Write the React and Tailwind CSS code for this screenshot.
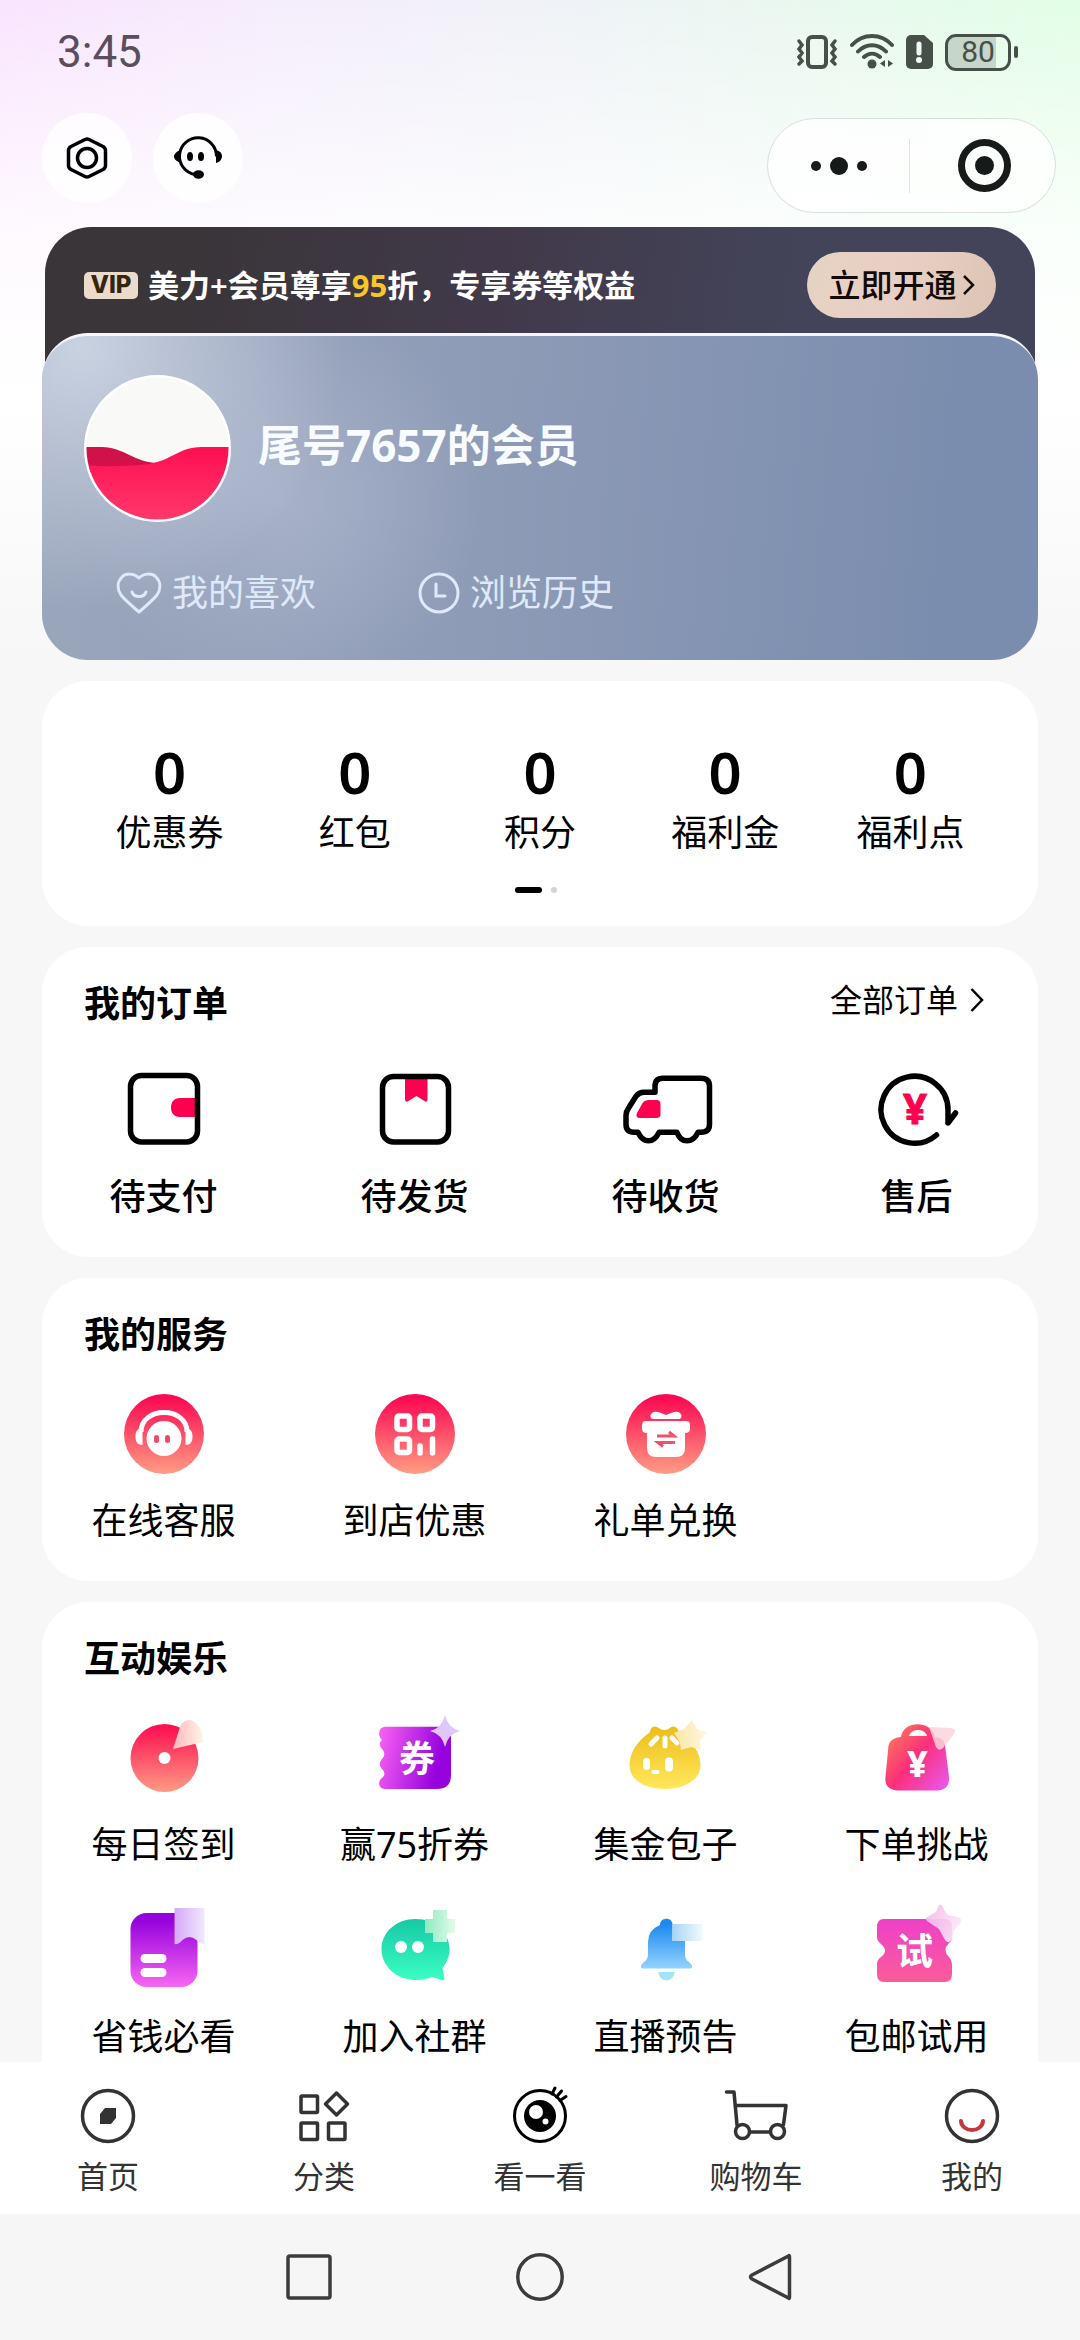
import React from 'react'

/* ---------- status bar ---------- */
function StatusBar() {
  return (
    <div className="flex h-[104px] items-center justify-between pl-[57px] pr-[62px] text-[#4b4a4e]">
      <span className="[font-family:Roboto,sans-serif] text-[44px] leading-none text-[#5a4d5c]">3:45</span>
      <div className="flex items-center gap-3">
        <svg width="42" height="36" viewBox="0 0 42 36" fill="none" stroke="#465048" strokeWidth="3" strokeLinecap="round">
          <rect x="12" y="3" width="18" height="30" rx="4" strokeWidth="4" />
          <path d="M3 7l3 4-3 4 3 4-3 4 3 4-3 3M39 7l-3 4 3 4-3 4 3 4-3 4 3 3" strokeWidth="3.500" />
        </svg>
        <svg width="44" height="36" viewBox="0 0 44 36" fill="none" stroke="#465048" strokeWidth="4" strokeLinecap="round">
          <path d="M2 11C13-1 31-1 42 11M8 17.500C16 9 28 9 36 17.500M14 23C19 18.500 25 18.500 30 23" />
          <circle cx="22" cy="30" r="4.500" fill="#465048" stroke="none" />
          <path d="M35 26v7l-5-3.500zM38 26v7l5-3.500z" fill="#465048" stroke="none" />
        </svg>
        <svg width="27" height="34" viewBox="0 0 27 34">
          <path d="M5 0h13l9 8v21a5 5 0 0 1-5 5H5a5 5 0 0 1-5-5V5a5 5 0 0 1 5-5z" fill="#465048" />
          <path d="M13 9v9" stroke="#f0fdf4" strokeWidth="5" strokeLinecap="round" />
          <circle cx="13" cy="25" r="3" fill="#f0fdf4" />
        </svg>
        <div className="flex items-center gap-[3px]">
          <div className="flex h-[37px] w-[66px] items-center justify-center rounded-[11px] border-[3px] border-[#465048] bg-[linear-gradient(90deg,#c6d6ca_80%,transparent_80%)] [font-family:Roboto,sans-serif] text-[30px] leading-none text-[#465048]">
            80
          </div>
          <div className="h-3 w-1 rounded bg-[#465048]"></div>
        </div>
      </div>
    </div>
  )
}

/* ---------- round buttons + mini program capsule ---------- */
function Header() {
  return (
    <header className="flex items-start justify-between pt-[9px] pb-[14px] pl-[42px] pr-6">
      <div className="flex gap-[21px]">
        <button aria-label="设置" className="flex size-[90px] items-center justify-center rounded-full bg-white/80">
          <svg width="48" height="48" viewBox="0 0 48 48" fill="none" stroke="#000" strokeWidth="3.500" strokeLinejoin="round">
            <path d="M22 5.500q2-1 4 0l14 7q2.500 1.500 2.500 4v15q0 2.500-2.500 4l-14 7q-2 1-4 0l-14-7q-2.500-1.500-2.500-4v-15q0-2.500 2.500-4z" />
            <circle cx="24" cy="24" r="9.500" />
          </svg>
        </button>
        <button aria-label="客服" className="flex size-[90px] items-center justify-center rounded-full bg-white/80">
          <svg width="48" height="48" viewBox="0 0 48 48" fill="none" stroke="#000" strokeWidth="3">
            <path d="M42.500 22.500A18.500 18.500 0 1 0 21 40.500" />
            <path d="M7 16v13C2 27 0 25 0 22.500S3 17 7 16zM42 16c4 1 6 3 6 6s-2 6-6 7z" fill="#000" stroke="none" />
            <ellipse cx="24.500" cy="40.500" rx="5.500" ry="4.200" fill="#000" stroke="none" />
            <ellipse cx="16" cy="22.500" rx="3" ry="4.500" fill="#000" stroke="none" />
            <ellipse cx="27" cy="22.500" rx="3" ry="4.500" fill="#000" stroke="none" />
          </svg>
        </button>
      </div>
      <div className="mt-[5px] flex h-[95px] w-[289px] items-center rounded-full border border-[#d9dfdd] bg-white/80">
        <button aria-label="更多" className="flex flex-1 items-center justify-center gap-[9px]">
          <span className="size-[10px] rounded-full bg-[#161a19]"></span>
          <span className="size-[18px] rounded-full bg-[#161a19]"></span>
          <span className="size-[10px] rounded-full bg-[#161a19]"></span>
        </button>
        <span className="h-[54px] w-px bg-[#dde3e1]"></span>
        <button aria-label="关闭" className="flex flex-1 items-center justify-center pl-1">
          <span className="flex size-[53px] items-center justify-center rounded-full border-[7px] border-[#161a19]">
            <span className="size-[19px] rounded-full bg-[#161a19]"></span>
          </span>
        </button>
      </div>
    </header>
  )
}

/* ---------- member card ---------- */
function MemberCard() {
  return (
    <section>
      <div className="mx-[3px] flex items-center justify-between rounded-t-[46px] bg-[linear-gradient(100deg,#3a3539_15%,#41394a_45%,#434459_75%)] px-[39px] pt-[25px] pb-[75px]">
        <div className="flex items-center gap-[10px]">
          <span className="flex h-[27px] w-[54px] items-center justify-center rounded-[5px] bg-[#eadbcb] [font-family:Inter,sans-serif] text-[24px] font-extrabold leading-none text-[#33260c]">
            VIP
          </span>
          <p className="text-[31px] font-semibold leading-10 text-white">
            美力+会员尊享<span className="font-bold text-[#f5c728]">95</span>折，专享券等权益
          </p>
        </div>
        <button className="flex h-[66px] w-[189px] items-center justify-center gap-[6px] rounded-full bg-[linear-gradient(110deg,#e6d3c4,#e8cfc3_50%,#dcc4b4)] text-[32px] font-medium leading-10 text-[#140b08]">
          立即开通
          <svg width="12" height="20" viewBox="0 0 12 20" fill="none" stroke="#140b08" strokeWidth="2.500">
            <path d="M1 1l9 9-9 9" />
          </svg>
        </button>
      </div>

      <div className="relative -mt-[60px] rounded-[46px] border-t-[3px] border-[#f4f6fb] bg-[radial-gradient(circle_at_4%_4%,#c9d2e1_0,rgba(201,210,225,0)_26%),radial-gradient(circle_at_24%_50%,rgba(172,182,206,0.8)_0,rgba(172,182,206,0)_26%),linear-gradient(95deg,#9aa6bb_0,#8e9bb7_45%,#7b8dae_90%)] pt-[39px] pb-[46px]">
        <div className="flex items-center gap-[27px] pl-[42px]">
          <svg width="147" height="147" viewBox="0 0 147 147">
            <defs>
              <clipPath id="face"><circle cx="73.500" cy="73.500" r="71" /></clipPath>
              <linearGradient id="wave" x1="0" y1="0" x2="0" y2="1">
                <stop offset="0" stopColor="#ff0f52" />
                <stop offset="1" stopColor="#ff3a6c" />
              </linearGradient>
            </defs>
            <circle cx="73.500" cy="73.500" r="73.500" fill="#fff" />
            <g clipPath="url(#face)">
              <rect width="147" height="147" fill="#f9faf8" />
              <path d="M0 72h18c22 0 34 17 58 16l-8 10H0z" fill="#d0114a" />
              <path d="M0 90c20 2 40 1 56 0 32-2 36-18 62-18h29v75H0z" fill="url(#wave)" />
            </g>
          </svg>
          <h1 className="pb-2 text-[44px] font-bold leading-[56px] text-[#f8fbff]">尾号7657的会员</h1>
        </div>
        <div className="mt-[50px] flex gap-[102px] pl-[74px] text-[36px] leading-10 text-[#dfe9fa]">
          <a href="#like" className="flex items-center gap-[10px]">
            <svg width="46" height="42" viewBox="0 0 46 42" fill="none" stroke="#dfe9fa" strokeWidth="3" strokeLinecap="round" strokeLinejoin="round">
              <path d="M23 6C18 1 10 1 6 5c-5 5-5 12-1 18 4 5 11 11 18 17 7-6 14-12 18-17 4-6 4-13-1-18-4-4-12-4-17 1z" />
              <path d="M16 20c2 6 12 6 14 0" />
            </svg>
            我的喜欢
          </a>
          <a href="#history" className="flex items-center gap-[10px]">
            <svg width="42" height="42" viewBox="0 0 42 42" fill="none" stroke="#dfe9fa" strokeWidth="3" strokeLinecap="round">
              <circle cx="21" cy="21" r="19" />
              <path d="M18 12v12h9" />
            </svg>
            浏览历史
          </a>
        </div>
      </div>
    </section>
  )
}

const stats = ['优惠券', '红包', '积分', '福利金', '福利点']

function Stats() {
  return (
    <section className="rounded-[46px] bg-white px-[35px] pt-[61px] pb-[33px]">
      <div className="grid grid-cols-5">
        {stats.map((name) => (
          <a href="#assets" key={name} className="flex flex-col items-center gap-[11px]">
            <span className="text-[58px] font-semibold leading-[60px]">0</span>
            <span className="text-[36px] leading-10">{name}</span>
          </a>
        ))}
      </div>
      <div className="mt-[34px] mr-2 flex justify-center gap-[9px]">
        <span className="h-[6px] w-[27px] rounded-full bg-black"></span>
        <span className="size-[6px] rounded-full bg-[#d3d3d3]"></span>
      </div>
    </section>
  )
}

/* ---------- order icons ---------- */
function WalletIcon() {
  return (
    <svg width="96" height="80" viewBox="0 0 96 80" fill="none">
      <path d="M82 29H64c-6 0-9 4-9 9.500S58 48 64 48h18z" fill="#ff0050" />
      <rect x="14.500" y="6.500" width="67" height="66.500" rx="11" stroke="#000" strokeWidth="5.500" />
    </svg>
  )
}

function PackageIcon() {
  return (
    <svg width="96" height="80" viewBox="0 0 96 80" fill="none">
      <path d="M38 8h22.500v22q0 4-3 2l-8-5-8 5q-3.500 2-3.500-2z" fill="#ff0050" />
      <rect x="15.500" y="7.500" width="66" height="65.500" rx="11" stroke="#000" strokeWidth="5.500" />
    </svg>
  )
}

function TruckIcon() {
  return (
    <svg width="96" height="80" viewBox="0 0 96 80" fill="none" strokeLinejoin="round">
      <path d="M31 31h7.500q4 0 4 4v10q0 4-4 4H22q-5 0-3-5l5-9q2-4 7-4z" fill="#ff0050" />
      <path d="M37 23.300v-6q0-8 8-8h38q8.500 0 8.500 8v38q0 8-8.500 8h-3q-4 8.500-11 8.500t-10-8.500H41q-4 8.500-10.500 8.500T20 63.300h-4q-8 0-8-8v-9q0-4 3-8l7-11q3-4 8-4z" stroke="#000" strokeWidth="5.500" />
    </svg>
  )
}

function RefundIcon() {
  return (
    <svg width="96" height="80" viewBox="0 0 96 80" fill="none" strokeLinecap="round" strokeLinejoin="round">
      <path d="M67.500 66A33.500 33.500 0 1 1 79 41v13l7.500-10" stroke="#000" strokeWidth="5.500" />
      <text x="46" y="55" textAnchor="middle" fontSize="42" fontWeight="700" fill="#ff0050" stroke="#ff0050" strokeWidth="1">¥</text>
    </svg>
  )
}

/* ---------- service icons ---------- */
function RoundIcon({ children }) {
  return (
    <svg width="80" height="80" viewBox="0 0 80 80">
      <defs>
        <linearGradient id="round" x1="0" y1="0" x2="0" y2="1">
          <stop offset="0.050" stopColor="#fb0a52" />
          <stop offset="1" stopColor="#ff9d84" />
        </linearGradient>
      </defs>
      <circle cx="40" cy="40" r="40" fill="url(#round)" />
      {children}
    </svg>
  )
}

function HeadsetIcon() {
  return (
    <RoundIcon>
      <path d="M17 38C17 12 63 12 63 38" fill="none" stroke="#fff" strokeWidth="5" />
      <path d="M18.500 34v17c-5 0-7-3-7-8.500s2-8 7-8.500zM61.500 34v17c5 0 7-3 7-8.500s-2-8-7-8.500z" fill="#fff" />
      <circle cx="40" cy="44.500" r="17.500" fill="#fff" />
      <rect x="30" y="41" width="5" height="8" rx="2.500" fill="#f04a6a" />
      <rect x="41" y="41" width="5" height="8" rx="2.500" fill="#f04a6a" />
    </RoundIcon>
  )
}

function QrIcon() {
  return (
    <RoundIcon>
      <g fill="none" stroke="#fff" strokeWidth="5.500">
        <rect x="22" y="22" width="12.500" height="13.500" rx="2" />
        <rect x="45" y="22" width="12.500" height="13.500" rx="2" />
        <rect x="22" y="45" width="12.500" height="13.500" rx="2" />
        <path d="M45 52v7M57.500 45v14" strokeLinecap="round" />
      </g>
    </RoundIcon>
  )
}

function GiftIcon() {
  return (
    <RoundIcon>
      <path d="M28 18c5-1 8 2 12 3 4-1 7-4 12-3 4 1 5 6 1 7H27c-4-1-3-6 1-7z" fill="#fff" />
      <path d="M20 27h40q4 0 4 4v4q0 4-5 4v15q0 9-9 9H30q-9 0-9-9V39q-5 0-5-4v-4q0-4 4-4z" fill="#fff" />
      <path d="M31 42h17l-5-4M49 48.500H32l5 4" fill="none" stroke="#f3506b" strokeWidth="3" />
    </RoundIcon>
  )
}

/* ---------- fun icons ---------- */
function DiscIcon() {
  return (
    <svg width="96" height="96" viewBox="0 0 96 96">
      <defs>
        <linearGradient id="disc" x1="0" y1="0" x2="0" y2="1">
          <stop offset="0.050" stopColor="#fb1251" />
          <stop offset="1" stopColor="#ff9b85" />
        </linearGradient>
        <linearGradient id="discCut" x1="0" y1="0" x2="1" y2="0">
          <stop offset="0" stopColor="#ffb9bd" />
          <stop offset="1" stopColor="#fff3e6" />
        </linearGradient>
      </defs>
      <circle cx="48.500" cy="48" r="34" fill="url(#disc)" />
      <circle cx="48.500" cy="48" r="6" fill="#fff" />
      <path d="M57 39l7-22q3-8 11-7 12 5 12 22z" fill="url(#discCut)" />
    </svg>
  )
}

function CouponIcon() {
  return (
    <svg width="96" height="96" viewBox="0 0 96 96">
      <defs>
        <linearGradient id="coupon" x1="0" y1="0.300" x2="1" y2="0.500">
          <stop offset="0" stopColor="#f45ef2" />
          <stop offset="0.850" stopColor="#9603dc" />
        </linearGradient>
      </defs>
      <path d="M18 16.700h56q10 0 10 10V65q0 14-14 14H18c-7 0-8-8-2-12 2-2 2-5-1-8-3-4-3-6 0-10 3-3 3-7 0-10-3-4-3-6 0-9-5-5-3-13 3-13.300z" fill="url(#coupon)" />
      <text x="50" y="61.500" textAnchor="middle" fontSize="36" fontWeight="700" fill="#fff">券</text>
      <path d="M78 5q3 13 15 16-12 3-15 16-3-13-15-16 12-3 15-16z" fill="#dfc6fb" />
    </svg>
  )
}

function BunIcon() {
  return (
    <svg width="96" height="96" viewBox="0 0 96 96">
      <defs>
        <linearGradient id="bun" x1="0" y1="0" x2="0" y2="1">
          <stop offset="0" stopColor="#edbd1b" />
          <stop offset="1" stopColor="#ffe85c" />
        </linearGradient>
        <linearGradient id="bunStar" x1="0" y1="0" x2="1" y2="0">
          <stop offset="0" stopColor="#f9e6a4" />
          <stop offset="1" stopColor="#fff7e4" />
        </linearGradient>
      </defs>
      <path d="M35 17c4-2 6 3 11.500 3S53 15 57 17c3 1 3 4 5 6 12 8 20 19 20.500 31C83 70 66 79 47 79S11 71 11.500 54C12 41 21 30 31 23c2-2 1-5 4-6z" fill="url(#bun)" />
      <g stroke="#fff" strokeLinecap="round">
        <path d="M33 34l6-6M47 28v8M54 28l5 5" strokeWidth="5" />
        <path d="M28.500 51.500v5" strokeWidth="7" />
        <path d="M51 51.500v6" strokeWidth="8" />
        <path d="M35.500 62h4" strokeWidth="4" />
      </g>
      <path d="M74 10l5 9 10 3-7 8 1 10-10-3-10 3-1-8-6-9 10-4z" fill="url(#bunStar)" />
    </svg>
  )
}

function BagIcon() {
  return (
    <svg width="96" height="96" viewBox="0 0 96 96">
      <defs>
        <linearGradient id="bag" x1="0" y1="0.150" x2="1" y2="1">
          <stop offset="0" stopColor="#ff7a59" />
          <stop offset="0.450" stopColor="#fb2f7a" />
          <stop offset="1" stopColor="#e85bf5" />
        </linearGradient>
      </defs>
      <path d="M32 27c2-17 31-17 34 0q8 0 10 8l4 32q1 13-12 13.500H29q-14-1-12.500-14l3-31q2-8 12.500-8.500z" fill="url(#bag)" />
      <path d="M40 26c2-8 16-8 18 0z" fill="#fff" />
      <text x="48.500" y="66.500" textAnchor="middle" fontSize="36" fontWeight="800" fill="#fff">¥</text>
      <path d="M60 17l22 1q6 1 3 6L74 38q-4 4-7-1z" fill="#fbd3dc" opacity="0.850" />
    </svg>
  )
}

function BookIcon() {
  return (
    <svg width="96" height="96" viewBox="0 0 96 96">
      <defs>
        <linearGradient id="book" x1="0" y1="0" x2="0" y2="1">
          <stop offset="0.100" stopColor="#9503dd" />
          <stop offset="1" stopColor="#f866f2" />
        </linearGradient>
        <linearGradient id="mark" x1="0" y1="0" x2="1" y2="0">
          <stop offset="0" stopColor="#d6a8f6" />
          <stop offset="1" stopColor="#f1e8ff" />
        </linearGradient>
      </defs>
      <rect x="14.500" y="11" width="67" height="74" rx="16" fill="url(#book)" />
      <rect x="24.500" y="52" width="26" height="9" rx="4.500" fill="#fff" />
      <rect x="24.500" y="66" width="26" height="9" rx="4.500" fill="#fff" />
      <path d="M58.500 6h30v36q-5 0-8-4-7-6-14 0-4 5-8 4z" fill="url(#mark)" />
    </svg>
  )
}

function ChatIcon() {
  return (
    <svg width="96" height="96" viewBox="0 0 96 96">
      <defs>
        <linearGradient id="chat" x1="0" y1="0" x2="0" y2="1">
          <stop offset="0" stopColor="#16c8a4" />
          <stop offset="1" stopColor="#3bffc4" />
        </linearGradient>
        <linearGradient id="plus" x1="0" y1="0" x2="1" y2="0">
          <stop offset="0" stopColor="#8eeac0" />
          <stop offset="1" stopColor="#e2fbea" />
        </linearGradient>
      </defs>
      <path d="M48.500 17c19 0 34 13 34 30 0 8-3 14-7 19l2 11q0 2-3 1l-9-3c-5 2-11 3-17 3-19 0-34-14-34-31s15-30 34-30z" fill="url(#chat)" />
      <circle cx="34" cy="45" r="6" fill="#fff" />
      <circle cx="51" cy="45" r="6" fill="#fff" />
      <path d="M66 8h14v9h8v14h-8v9H66v-9h-8V17h8z" fill="url(#plus)" />
    </svg>
  )
}

function BellIcon() {
  return (
    <svg width="96" height="96" viewBox="0 0 96 96">
      <defs>
        <linearGradient id="bell" x1="0" y1="0" x2="0" y2="1">
          <stop offset="0.100" stopColor="#1b89ef" />
          <stop offset="1" stopColor="#93d3ff" />
        </linearGradient>
        <linearGradient id="bellCut" x1="0" y1="0" x2="1" y2="0">
          <stop offset="0" stopColor="#a9d4f5" />
          <stop offset="1" stopColor="#edfaff" />
        </linearGradient>
      </defs>
      <path d="M42 23c0-8 12-8 12.500-1v17H67v13q0 6 4 8 5 4 2 6.500H24q-3-2.500 2-6.500 4-2 4-8V40q0-12 12-17z" fill="url(#bell)" />
      <path d="M54.500 22H84v17H54.500z" fill="url(#bellCut)" />
      <path d="M40 70h17q-2 8.500-8.500 8.500T40 70z" fill="#a3e4f7" />
    </svg>
  )
}

function TrialIcon() {
  return (
    <svg width="96" height="96" viewBox="0 0 96 96">
      <defs>
        <linearGradient id="trial" x1="0" y1="0" x2="0" y2="1">
          <stop offset="0" stopColor="#ee40c8" />
          <stop offset="1" stopColor="#fb5c9a" />
        </linearGradient>
        <linearGradient id="trialStar" x1="0" y1="0" x2="1" y2="0.600">
          <stop offset="0" stopColor="#f5b4e6" />
          <stop offset="1" stopColor="#fceafa" />
        </linearGradient>
      </defs>
      <path d="M15 17h61q7 0 7 8v10q0 4-3 6-7 7 0 14 3 3 3 7v10q0 8-7 8H15q-7 0-7-8V62q0-4 4-7 8-6 0-13-4-3-4-7V25q0-8 7-8z" fill="url(#trial)" />
      <text x="45.500" y="62.500" textAnchor="middle" fontSize="37" fontWeight="700" fill="#fff">试</text>
      <path d="M70 3q4-1 5 5l4 5 10 2q6 3 2 7l-6 6-2 9q-3 6-7 1l-6-11-12-8q-3-3 2-5l7-4z" fill="url(#trialStar)" opacity="0.900" />
    </svg>
  )
}

const orders = [
  { name: '待支付', icon: <WalletIcon /> },
  { name: '待发货', icon: <PackageIcon /> },
  { name: '待收货', icon: <TruckIcon /> },
  { name: '售后', icon: <RefundIcon /> },
]

const services = [
  { name: '在线客服', icon: <HeadsetIcon /> },
  { name: '到店优惠', icon: <QrIcon /> },
  { name: '礼单兑换', icon: <GiftIcon /> },
]

const games = [
  { name: '每日签到', icon: <DiscIcon /> },
  { name: '赢75折券', icon: <CouponIcon /> },
  { name: '集金包子', icon: <BunIcon /> },
  { name: '下单挑战', icon: <BagIcon /> },
  { name: '省钱必看', icon: <BookIcon /> },
  { name: '加入社群', icon: <ChatIcon /> },
  { name: '直播预告', icon: <BellIcon /> },
  { name: '包邮试用', icon: <TrialIcon /> },
]

function Orders() {
  return (
    <section className="rounded-[46px] bg-white pt-[37px] pb-10">
      <div className="flex items-start justify-between pl-[42px] pr-[54px]">
        <h2 className="text-[36px] font-bold leading-10">我的订单</h2>
        <a href="#orders" className="flex items-center gap-3 text-[32px] leading-8">
          全部订单
          <svg width="14" height="24" viewBox="0 0 14 24" fill="none" stroke="#000" strokeWidth="2.500">
            <path d="M1.500 1l10.500 11-10.500 11" />
          </svg>
        </a>
      </div>
      <div className="-mx-1 mt-[45px] grid grid-cols-4">
        {orders.map((item) => (
          <a href="#order" key={item.name} className="flex flex-col items-center gap-7">
            {item.icon}
            <span className="text-[36px] font-medium leading-10">{item.name}</span>
          </a>
        ))}
      </div>
    </section>
  )
}

function Services() {
  return (
    <section className="rounded-[46px] bg-white pt-[37px] pb-10">
      <h2 className="pl-[42px] text-[36px] font-bold leading-10">我的服务</h2>
      <div className="-mx-1 mt-[39px] grid grid-cols-4">
        {services.map((item) => (
          <a href="#service" key={item.name} className="flex flex-col items-center gap-[27px]">
            {item.icon}
            <span className="text-[36px] leading-10">{item.name}</span>
          </a>
        ))}
      </div>
    </section>
  )
}

function Games() {
  return (
    <section className="rounded-t-[46px] bg-white pt-[37px] pb-[5px]">
      <h2 className="pl-[42px] text-[36px] font-bold leading-10">互动娱乐</h2>
      <div className="-mx-1 mt-[31px] grid grid-cols-4 gap-y-[37px]">
        {games.map((item) => (
          <a href="#game" key={item.name} className="flex flex-col items-center gap-[19px]">
            {item.icon}
            <span className="text-[36px] leading-10">{item.name}</span>
          </a>
        ))}
      </div>
    </section>
  )
}

/* ---------- tab bar ---------- */
const tabs = [
  {
    name: '首页',
    icon: (
      <svg width="64" height="64" viewBox="0 0 64 64" fill="none">
        <circle cx="32" cy="32" r="25.500" stroke="#333" strokeWidth="3.500" />
        <path d="M29 24h11v10l-5 6H24V30z" fill="#333" />
      </svg>
    ),
  },
  {
    name: '分类',
    icon: (
      <svg width="64" height="64" viewBox="0 0 64 64" fill="none" stroke="#333" strokeWidth="3.500" strokeLinejoin="round">
        <rect x="9" y="12" width="16.500" height="16.500" rx="1" />
        <path d="M44.500 9l11 11-11 11-11-11z" />
        <rect x="9" y="39" width="16.500" height="16.500" rx="1" />
        <rect x="36.500" y="39" width="16.500" height="16.500" rx="1" />
      </svg>
    ),
  },
  {
    name: '看一看',
    icon: (
      <svg width="64" height="64" viewBox="0 0 64 64" fill="none" stroke="#000" strokeWidth="3">
        <circle cx="32" cy="32" r="25.500" />
        <circle cx="32" cy="32" r="16" fill="#000" stroke="none" />
        <circle cx="28" cy="28" r="7" fill="#fff" stroke="none" />
        <circle cx="37.500" cy="37.500" r="3" fill="#fff" stroke="none" />
        <path d="M44 10l3-6M48.500 13l5-6M52 16.500l6-4" strokeLinecap="round" />
      </svg>
    ),
  },
  {
    name: '购物车',
    icon: (
      <svg width="64" height="64" viewBox="0 0 64 64" fill="none" stroke="#333" strokeWidth="3.500" strokeLinecap="round" strokeLinejoin="round">
        <path d="M2.500 8h7.500l3 33M11 21.500h51l-2.500 19M26 48h20" />
        <circle cx="18.500" cy="47.500" r="7" />
        <circle cx="53.500" cy="47.500" r="7" />
      </svg>
    ),
  },
  {
    name: '我的',
    icon: (
      <svg width="64" height="64" viewBox="0 0 64 64" fill="none" strokeLinecap="round">
        <circle cx="32" cy="32" r="25.500" stroke="#333" strokeWidth="3.500" />
        <path d="M21 37c1 12 21 12 22 0" stroke="#c33a3d" strokeWidth="4" />
      </svg>
    ),
  },
]

function TabBar() {
  return (
    <nav className="grid grid-cols-5 bg-white pt-[22px] pb-[20px]">
      {tabs.map((tab) => (
        <a href="#tab" key={tab.name} className="flex flex-col items-center gap-[10px] text-[#333]">
          {tab.icon}
          <span className="text-[31px] leading-9">{tab.name}</span>
        </a>
      ))}
    </nav>
  )
}

function SystemBar() {
  return (
    <div className="flex h-[126px] items-center justify-center gap-[183px] bg-[#f6f6f6]">
      <button aria-label="最近任务">
        <svg width="48" height="52" viewBox="0 0 48 52" fill="none" stroke="#3c3c3c" strokeWidth="3.500">
          <rect x="3" y="5" width="42" height="42" rx="2" />
        </svg>
      </button>
      <button aria-label="主屏幕">
        <svg width="48" height="52" viewBox="0 0 48 52" fill="none" stroke="#3c3c3c" strokeWidth="3.500">
          <circle cx="24" cy="26" r="22.200" />
        </svg>
      </button>
      <button aria-label="返回">
        <svg width="48" height="52" viewBox="0 0 48 52" fill="none" stroke="#3c3c3c" strokeWidth="3.500" strokeLinejoin="round">
          <path d="M41.500 5q1-1 1 1v40q0 2-1 1L5 28q-3-2 0-4z" />
        </svg>
      </button>
    </div>
  )
}

function App() {
  return (
    <div className="flex min-h-screen flex-col bg-[linear-gradient(180deg,rgba(255,255,255,0)_0,rgba(255,255,255,0.8)_230px,#ffffff_400px,#f7f7f7_660px),linear-gradient(90deg,#fae4fe_0,#f5edfc_25%,#eff3f6_55%,#e2fee6_100%)] [font-family:'Noto_Sans','Noto_Sans_CJK_SC',sans-serif] text-black">
      <StatusBar />
      <Header />
      <main className="flex flex-1 flex-col gap-[21px] px-[42px]">
        <MemberCard />
        <Stats />
        <Orders />
        <Services />
        <Games />
      </main>
      <TabBar />
      <SystemBar />
    </div>
  )
}

export default App
